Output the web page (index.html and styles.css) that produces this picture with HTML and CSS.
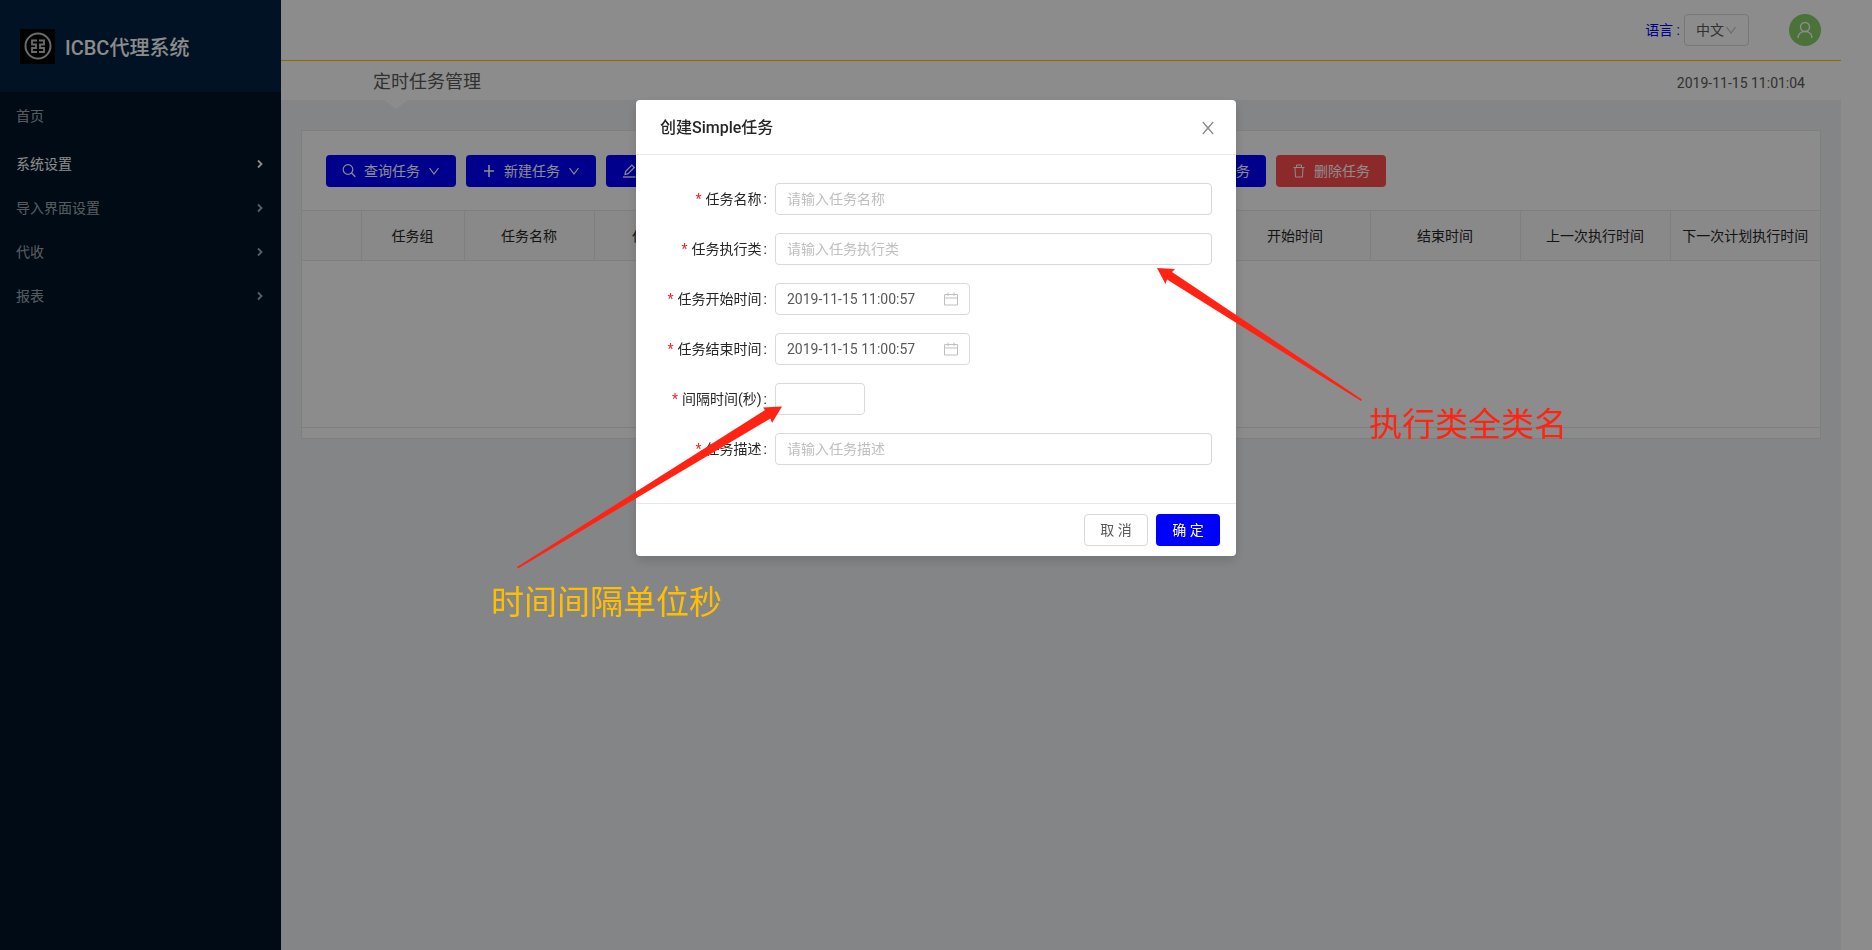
FILE: index.html
```html
<!DOCTYPE html>
<html lang="zh-CN">
<head>
<meta charset="utf-8">
<title>ICBC代理系统</title>
<link rel="stylesheet" href="styles.css">
</head>
<body>
<svg class="sprite" aria-hidden="true">
  <symbol id="down" viewBox="0 0 12 12"><path d="M1.500 3 6 9l4.500-6" fill="none" stroke="currentColor" stroke-width="1.200"/></symbol>
  <symbol id="right" viewBox="0 0 10 10"><path d="M3 1.500 6.500 5 3 8.500" fill="none" stroke="currentColor" stroke-width="1.800"/></symbol>
  <symbol id="search" viewBox="0 0 14 14"><circle cx="6" cy="5.500" r="4.800" fill="none" stroke="currentColor" stroke-width="1.200"/><path d="m9.300 8.800 4 4" stroke="currentColor" stroke-width="1.300"/></symbol>
  <symbol id="plus" viewBox="0 0 14 14"><path d="M7 1v12M2 7h10" stroke="currentColor" stroke-width="1.600"/></symbol>
  <symbol id="edit" viewBox="0 0 14 14"><path d="M1 13h12.500" stroke="currentColor" stroke-width="1.300"/><path d="M3 10.500l.7-3.200 6.200-6.200 2.400 2.400-6.200 6.200z" fill="none" stroke="currentColor" stroke-width="1.200"/></symbol>
  <symbol id="trash" viewBox="0 0 14 14"><path d="M1.500 3.500h11M4.500 3.500v-2.500h5v2.500M3 3.500l.5 9.500h7l.5-9.500" fill="none" stroke="currentColor"/></symbol>
  <symbol id="calendar" viewBox="0 0 14 14"><path d="M.5 2.500h13v10.500h-13zM.5 6h13M4 .5v3.500M10 .5v3.500" fill="none" stroke="currentColor"/></symbol>
  <symbol id="close" viewBox="0 0 14 14"><path d="m1.800 1 10.400 12M12.200 1l-10.400 12" stroke="currentColor" stroke-width="1.400"/></symbol>
</svg>

<div class="layout">
  <aside class="sidebar">
    <div class="brand">
      <svg class="logo" viewBox="0 0 35 35" aria-hidden="true">
        <path d="M0 0h35v35H0z" fill="#050505"/>
        <circle cx="18" cy="17" r="12.500" fill="none" stroke="#c4c4c4" stroke-width="2"/>
        <path d="M17 11.500h-5v4h4v3.500h-4v4h5M19 11.500h5v4h-4v3.500h4v4h-5" fill="none" stroke="#c4c4c4" stroke-width="1.800"/>
      </svg>
      <h1 class="brand-name">ICBC代理系统</h1>
    </div>
    <nav class="menu">
      <a class="menu-item menu-home" href="#">首页</a>
      <a class="menu-item menu-active" href="#">系统设置<svg class="menu-arrow"><use href="#right"/></svg></a>
      <a class="menu-item" href="#">导入界面设置<svg class="menu-arrow"><use href="#right"/></svg></a>
      <a class="menu-item" href="#">代收<svg class="menu-arrow"><use href="#right"/></svg></a>
      <a class="menu-item" href="#">报表<svg class="menu-arrow"><use href="#right"/></svg></a>
    </nav>
  </aside>

  <main class="main">
    <header class="topbar">
      <label class="lang-label" for="lang">语言 :</label>
      <span class="select-wrap">
        <select id="lang" class="lang-select"><option>中文</option></select>
        <svg class="select-arrow"><use href="#down"/></svg>
      </span>
      <svg class="avatar" viewBox="0 0 32 32" aria-hidden="true">
        <circle cx="16" cy="16" r="16" fill="#87d068"/>
        <circle cx="16" cy="13" r="4.500" fill="none" stroke="#fff" stroke-width="1.500"/>
        <path d="M9 24c0-4 3-6.500 7-6.500s7 2.500 7 6.500" fill="none" stroke="#fff" stroke-width="1.500"/>
      </svg>
    </header>
    <div class="titlebar">
      <h2 class="page-title">定时任务管理</h2>
      <time class="clock">2019-11-15 11:01:04</time>
    </div>
    <section class="content">
      <div class="card">
        <div class="toolbar">
          <button class="btn btn-primary"><svg class="icon"><use href="#search"/></svg>查询任务<svg class="caret"><use href="#down"/></svg></button>
          <button class="btn btn-primary"><svg class="icon"><use href="#plus"/></svg>新建任务<svg class="caret"><use href="#down"/></svg></button>
          <button class="btn btn-primary"><svg class="icon"><use href="#edit"/></svg>修改任务</button>
          <button class="btn btn-primary"><svg class="icon"><use href="#plus"/></svg>暂停任务</button>
          <button class="btn btn-primary"><svg class="icon"><use href="#plus"/></svg>暂停全部任务</button>
          <button class="btn btn-primary"><svg class="icon"><use href="#plus"/></svg>恢复全部任务</button>
          <button class="btn btn-primary"><svg class="icon"><use href="#plus"/></svg>恢复单任务</button>
          <button class="btn btn-danger"><svg class="icon"><use href="#trash"/></svg>删除任务</button>
        </div>
        <table class="table">
          <colgroup><col class="c-check"><col class="c-group"><col class="c-name"><col class="c-class"><col><col><col><col class="c-time"><col class="c-time"><col class="c-time"><col class="c-time"></colgroup>
          <thead><tr><th></th><th>任务组</th><th>任务名称</th><th>任务执行类</th><th>任务描述</th><th>任务状态</th><th>任务类型</th><th>开始时间</th><th>结束时间</th><th>上一次执行时间</th><th>下一次计划执行时间</th></tr></thead>
        </table>
        <div class="table-body"></div>
        <div class="table-foot"></div>
      </div>
    </section>
  </main>
</div>

<div class="mask">
  <form class="modal" role="dialog" aria-labelledby="modal-title">
    <header class="modal-head">
      <h3 class="modal-title" id="modal-title">创建Simple任务</h3>
      <button class="modal-close" type="button" aria-label="关闭"><svg class="icon"><use href="#close"/></svg></button>
    </header>
    <div class="modal-body">
      <div class="row"><label class="label" for="name">任务名称</label><input class="input" id="name" placeholder="请输入任务名称"></div>
      <div class="row"><label class="label" for="cls">任务执行类</label><input class="input" id="cls" placeholder="请输入任务执行类"></div>
      <div class="row"><label class="label" for="start">任务开始时间</label><span class="date"><input class="input" id="start" value="2019-11-15 11:00:57"><svg class="date-icon"><use href="#calendar"/></svg></span></div>
      <div class="row"><label class="label" for="end">任务结束时间</label><span class="date"><input class="input" id="end" value="2019-11-15 11:00:57"><svg class="date-icon"><use href="#calendar"/></svg></span></div>
      <div class="row"><label class="label" for="gap">间隔时间(秒)</label><input class="input input-number" id="gap"></div>
      <div class="row"><label class="label" for="desc">任务描述</label><input class="input" id="desc" placeholder="请输入任务描述"></div>
    </div>
    <footer class="modal-foot">
      <button class="btn btn-plain" type="button">取 消</button>
      <button class="btn btn-primary btn-ok" type="button">确 定</button>
    </footer>
    <svg class="arrows" viewBox="0 0 1 1" aria-hidden="true">
      <path d="M-119 467 129 310 127 307.500 146 306.500 136 323 134.500 318.500-118 468.500z"/>
      <path d="M521 168 539 169 536 172 726 299.500 725 301 531 179.500 529.500 184z"/>
    </svg>
    <p class="note note-interval">时间间隔单位秒</p>
    <p class="note note-class">执行类全类名</p>
  </form>
</div>
</body>
</html>
```
FILE: styles.css
```css
* { box-sizing: border-box; }
body {
  margin: 0;
  font: 14px/22px Roboto, "Noto Sans CJK SC", sans-serif;
  color: #595959;
  background: #fff;
}
h1, h2, h3, p { margin: 0; font-weight: 400; }
button, input, select { font: inherit; color: inherit; }
.sprite { display: none; }
.icon { width: 14px; height: 14px; flex: none; }

.layout { display: flex; min-height: 100vh; padding-right: 31px; }
.sidebar { flex: none; width: 281px; background: #001529; }
.brand { display: flex; align-items: center; gap: 10px; height: 92px; padding: 0 20px; background: #002140; }
.logo { width: 35px; height: 35px; }
.brand-name { padding-top: 3px; font-size: 20px; line-height: 32px; font-weight: 500; color: #fff; }
.menu { display: flex; flex-direction: column; gap: 4px; padding-top: 4px; }
.menu-item {
  display: flex; align-items: center; justify-content: space-between;
  height: 40px; padding: 0 16px;
  color: rgba(255, 255, 255, .65); text-decoration: none;
}
.menu-home { margin-bottom: 4px; }
.menu-active { color: #fff; }
.menu-arrow { width: 10px; height: 10px; }

.main { flex: 1; min-width: 0; display: flex; flex-direction: column; }
.topbar { display: flex; align-items: center; justify-content: flex-end; height: 61px; padding-right: 20px; border-bottom: 1px solid #ffbf00; }
.lang-label { color: #00f; margin-right: 4px; }
.select-wrap { display: grid; align-items: center; width: 65px; margin-right: 40px; }
.lang-select { grid-area: 1 / 1; appearance: none; height: 32px; padding: 0 11px; border: 1px solid #d9d9d9; border-radius: 4px; background: #fff; }
.select-arrow { grid-area: 1 / 1; justify-self: end; width: 12px; height: 12px; margin-right: 12px; color: #bfbfbf; }
.avatar { width: 32px; height: 32px; }
.titlebar { display: flex; align-items: center; justify-content: space-between; height: 39px; padding: 0 36px 0 92px; }
.page-title { position: relative; padding-top: 2px; font-size: 18px; line-height: 37px; }
.page-title::after {
  content: ""; position: absolute; left: 11px; top: 100%;
  border: 12px solid transparent; border-top: 9px solid #fff; border-bottom: 0;
}
.clock { padding-top: 4px; }
.content { flex: 1; padding: 30px 20px; background: #f0f2f5; }
.card { border: 1px solid #e8e8e8; background: #fff; }
.toolbar { display: flex; gap: 10px; padding: 24px 24px 23px; }

.btn {
  display: inline-flex; align-items: center; justify-content: center; gap: 8px; flex: none;
  height: 32px; padding: 0 15px; border: 1px solid transparent; border-radius: 4px;
  white-space: nowrap; cursor: pointer;
}
.btn-primary { background: #00f; color: #fff; }
.btn-danger { background: #ff4d4f; color: #fff; }
.btn-plain { background: #fff; border-color: #d9d9d9; }
.caret { width: 12px; height: 12px; }

.table { width: 100%; table-layout: fixed; border-collapse: collapse; }
.table th { height: 50px; padding: 0; border: 1px solid #e8e8e8; background: #fafafa; color: #262626; font-weight: 400; text-align: center; white-space: nowrap; }
.table th:first-child { border-left: 0; }
.table th:last-child { border-right: 0; }
.c-check { width: 59px; }
.c-group { width: 103px; }
.c-name { width: 130px; }
.c-class { width: 146px; }
.c-time { width: 150px; }
.table-body { height: 167px; border-bottom: 1px solid #e8e8e8; }
.table-foot { height: 10px; }

.mask { position: fixed; inset: 0; display: flex; align-items: flex-start; justify-content: center; padding-top: 100px; background: rgba(0, 0, 0, .45); }
.modal { position: relative; width: 600px; border-radius: 4px; background: #fff; box-shadow: 0 4px 12px rgba(0, 0, 0, .15); }
.modal-head { display: flex; align-items: center; justify-content: space-between; height: 55px; padding: 1px 21px 0 24px; border-bottom: 1px solid #e8e8e8; }
.modal-title { font-size: 16px; font-weight: 500; color: #262626; }
.modal-close { display: flex; padding: 0; border: 0; background: none; color: #8c8c8c; cursor: pointer; }
.modal-body { display: flex; flex-direction: column; gap: 10px; padding: 24px 24px 34px; }
.row { display: flex; align-items: center; height: 40px; }
.label { flex: none; width: 115px; padding-right: 8px; text-align: right; color: #262626; }
.label::before { content: "*"; margin-right: 4px; color: #f5222d; }
.label::after { content: ":"; margin-left: 2px; }
.input { width: 100%; height: 32px; padding: 4px 11px; border: 1px solid #d9d9d9; border-radius: 4px; background: #fff; outline: 0; }
.input::placeholder { color: #bfbfbf; }
.input-number { width: 90px; }
.date { display: grid; align-items: center; width: 195px; }
.date .input { grid-area: 1 / 1; }
.date-icon { grid-area: 1 / 1; justify-self: end; width: 14px; height: 14px; margin-right: 12px; color: #bfbfbf; }
.modal-foot { display: flex; justify-content: flex-end; gap: 8px; padding: 10px 16px; border-top: 1px solid #e8e8e8; }
.modal-foot .btn { width: 64px; }

.arrows { position: absolute; left: 0; top: 0; width: 1px; height: 1px; overflow: visible; fill: #ff2313; pointer-events: none; }
.note { position: absolute; font-size: 33px; line-height: 48px; white-space: nowrap; }
.note-interval { left: -145px; top: 479px; color: #ffbf00; }
.note-class { left: 733px; top: 301px; color: #ff2313; }
```
